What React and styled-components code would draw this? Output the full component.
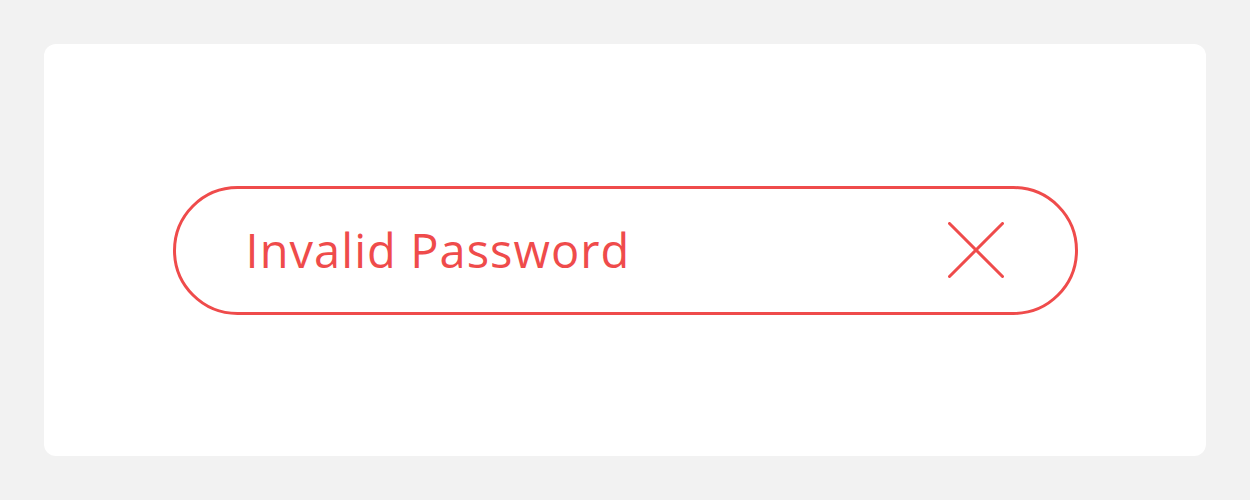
import React from "react";
import styled, { createGlobalStyle } from "styled-components";

const Global = createGlobalStyle`
  html, body { margin: 0; padding: 0; background: #f2f2f2; }
  body { font-family: "Open Sans", "Liberation Sans", sans-serif; }
`;

const Page = styled.div`
  width: 1250px;
  height: 500px;
  padding: 44px;
  box-sizing: border-box;
  display: flex;
`;

const Card = styled.div`
  flex: 1;
  background: #ffffff;
  border-radius: 12px;
  display: flex;
  align-items: center;
  justify-content: center;
`;

const Field = styled.div`
  width: 905px;
  height: 129px;
  box-sizing: border-box;
  border: 3px solid #ef4b4b;
  border-radius: 65px;
  display: flex;
  align-items: center;
  justify-content: space-between;
  padding: 0 71px 0 70px;
`;

const Message = styled.span`
  color: #ef4b4b;
  font-family: "Open Sans", sans-serif;
  font-size: 47px;
  font-weight: 400;
  letter-spacing: 1.05px;
  line-height: 1;
`;

const ClearButton = styled.button`
  width: 56px;
  height: 56px;
  padding: 0;
  border: 0;
  background: transparent;
  display: flex;
  align-items: center;
  justify-content: center;
  cursor: pointer;
`;

export default function App() {
  return (
    <>
      <Global />
      <Page>
        <Card>
          <Field>
            <Message>Invalid Password</Message>
            <ClearButton aria-label="Clear">
              <svg width="56" height="56" viewBox="0 0 56 56" fill="none">
                <path d="M1.5 1.5 L54.5 54.5 M54.5 1.5 L1.5 54.5" stroke="#ef4b4b" strokeWidth="3" strokeLinecap="round" />
              </svg>
            </ClearButton>
          </Field>
        </Card>
      </Page>
    </>
  );
}
